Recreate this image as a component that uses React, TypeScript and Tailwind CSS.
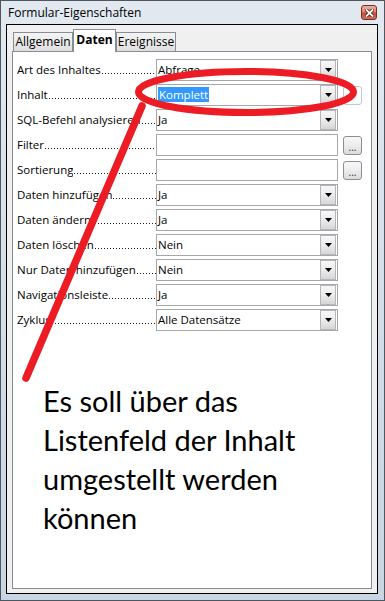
import type { ReactNode } from "react";

type Row = {
  label: string;
  value: string;
  kind: "select" | "text";
  selected?: boolean;
  button?: "dots" | "ghost";
};

const rows: Row[] = [
  { label: "Art des Inhaltes", value: "Abfrage", kind: "select" },
  { label: "Inhalt", value: "Komplett", kind: "select", selected: true, button: "ghost" },
  { label: "SQL-Befehl analysieren", value: "Ja", kind: "select" },
  { label: "Filter", value: "", kind: "text", button: "dots" },
  { label: "Sortierung", value: "", kind: "text", button: "dots" },
  { label: "Daten hinzufügen", value: "Ja", kind: "select" },
  { label: "Daten ändern", value: "Ja", kind: "select" },
  { label: "Daten löschen", value: "Nein", kind: "select" },
  { label: "Nur Daten hinzufügen", value: "Nein", kind: "select" },
  { label: "Navigationsleiste", value: "Ja", kind: "select" },
  { label: "Zyklus", value: "Alle Datensätze", kind: "select" },
];

export default function App() {
  return (
    <div className="relative flex h-[601px] w-[385px] flex-col overflow-hidden border border-[#50565e] bg-[linear-gradient(180deg,#e2e9f1_0%,#d9e2ec_30%,#cfdae6_70%,#c9d5e2_100%)] pb-[6px] pl-[5px] pr-[6px] font-['Segoe_UI','Open_Sans',sans-serif] text-[11.5px] text-black">
      <TitleBar />
      <div className="flex flex-1 flex-col border border-black bg-[#f0f0f0] px-[5px] pb-[4px] pt-[4px]">
        <Tabs />
        <div className="flex flex-1 flex-col gap-[3px] border border-[#898c95] bg-white pl-[4px] pt-[7px]">
          {rows.map((row) => (
            <PropertyRow key={row.label} row={row} />
          ))}
          <p className="mt-[47px] pl-[26px] font-['Lato',sans-serif] text-[29px] leading-[39px]">
            Es soll über das
            <br />
            Listenfeld der Inhalt
            <br />
            umgestellt werden
            <br />
            können
          </p>
        </div>
      </div>
      <Annotation />
    </div>
  );
}

function TitleBar() {
  return (
    <div className="flex h-[23px] items-start justify-between pl-[2px]">
      <span className="pt-[4px] text-[12px] leading-[16px]">Formular-Eigenschaften</span>
      <button
        type="button"
        className="mr-[1px] mt-[4px] flex h-[15px] w-[16px] items-center justify-center rounded-[3px] border border-[#7a2c20] bg-[linear-gradient(180deg,#eeb0a0_0%,#e08068_45%,#c84a32_55%,#d8705a_100%)]"
      >
        <svg width="9" height="8" viewBox="0 0 9 8">
          <path
            d="M1.5 1 L7.5 7 M7.5 1 L1.5 7"
            stroke="#4a2018"
            strokeWidth="3.4"
            strokeLinecap="square"
          />
          <path
            d="M1.5 1 L7.5 7 M7.5 1 L1.5 7"
            stroke="#ffffff"
            strokeWidth="1.8"
            strokeLinecap="square"
          />
        </svg>
      </button>
    </div>
  );
}

function Tabs() {
  return (
    <div className="flex h-[22px] items-end pl-[1px] text-[12px]">
      <Tab>Allgemein</Tab>
      <div className="relative z-10 -mb-px flex h-[23px] w-[43px] items-start justify-center border border-b-0 border-[#898c95] bg-white pt-[2px] font-bold leading-[16px]">
        Daten
      </div>
      <Tab>Ereignisse</Tab>
    </div>
  );
}

function Tab({ children }: { children: ReactNode }) {
  return (
    <div className="flex h-[19px] w-[60px] items-center justify-center border border-b-0 border-[#898c95] bg-[linear-gradient(180deg,#f3f3f3_0%,#ebebeb_50%,#dedede_100%)] leading-[16px]">
      {children}
    </div>
  );
}

function PropertyRow({ row }: { row: Row }) {
  return (
    <div className="flex h-[22px] items-center">
      {/* Label mit Punkt-Leiste bis zum Feld */}
      <div className="flex w-[139px] shrink-0 items-end">
        <span className="min-w-0 overflow-hidden whitespace-nowrap leading-[16px]">
          {row.label}
        </span>
        <span className="mb-[4px] h-px min-w-[12px] flex-1 bg-[linear-gradient(90deg,#1a1a1a_1px,transparent_1px)] bg-[length:3px_1px] bg-[position:1px_0] bg-repeat-x" />
      </div>
      <div className="flex h-[22px] w-[182px] shrink-0 items-center border border-[#a5a7ab] bg-white pl-[1px]">
        <span className="flex-1 whitespace-nowrap leading-[16px]">
          {row.selected ? (
            <span className="bg-[#3399ff] px-[1px] text-white">{row.value}</span>
          ) : (
            row.value
          )}
        </span>
        {row.kind === "select" ? <DropButton /> : null}
      </div>
      {row.button === "dots" ? (
        <div className="ml-[5px] flex h-[19px] w-[19px] items-end justify-center rounded-[3px] border border-[#8a8d93] bg-[linear-gradient(180deg,#f8f8f8_0%,#ececec_50%,#dcdcdc_100%)] pb-[3px] text-[10px] leading-[8px] text-[#303030]">
          ...
        </div>
      ) : null}
      {row.button === "ghost" ? (
        <div className="ml-[5px] h-[19px] w-[19px] rounded-[3px] border border-[#c4c6ca] bg-white" />
      ) : null}
    </div>
  );
}

function DropButton() {
  return (
    <div className="mr-px flex h-[20px] w-[16px] items-center justify-center border border-[#b4b6ba] bg-[linear-gradient(180deg,#f7f7f7_0%,#ebebeb_50%,#d6d6d6_100%)]">
      <svg width="7" height="4" viewBox="0 0 7 4">
        <path d="M0 0 H7 L3.5 4 Z" fill="#000" />
      </svg>
    </div>
  );
}

function Annotation() {
  return (
    <svg
      className="pointer-events-none absolute left-[-1px] top-[-1px]"
      width="385"
      height="601"
      viewBox="0 0 385 601"
    >
      <ellipse
        cx="246"
        cy="92"
        rx="107.5"
        ry="20.5"
        fill="none"
        stroke="#ed1c24"
        strokeWidth="7"
      />
      <line
        x1="142"
        y1="106"
        x2="26"
        y2="378"
        stroke="#ed1c24"
        strokeWidth="7.5"
        strokeLinecap="round"
      />
    </svg>
  );
}
